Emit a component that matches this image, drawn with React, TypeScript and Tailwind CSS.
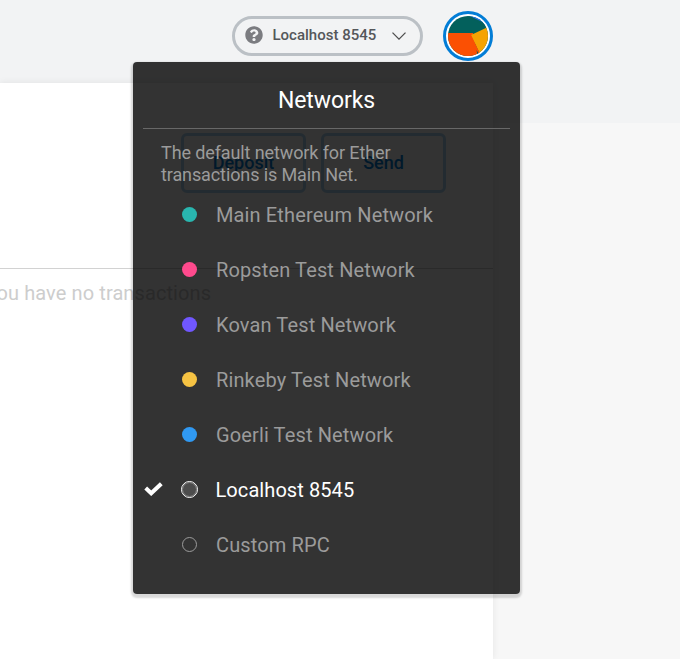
import React from 'react';

const networks = [
  { name: 'Main Ethereum Network', dot: 'bg-[#29b6af]' },
  { name: 'Ropsten Test Network', dot: 'bg-[#ff4a8d]' },
  { name: 'Kovan Test Network', dot: 'bg-[#7057ff]' },
  { name: 'Rinkeby Test Network', dot: 'bg-[#f6c343]' },
  { name: 'Goerli Test Network', dot: 'bg-[#3099f2]' },
];

function NetworkPicker() {
  return (
    <button className="flex h-10 w-[191px] items-center rounded-full border-3 border-[#bbc0c5] pl-[10px] pr-[14px]">
      <svg width="18" height="18" viewBox="0 0 512 512" className="mb-[2px] shrink-0" fill="#7b7c80">
        <path d="M504 256c0 136.997-111.043 248-248 248S8 392.997 8 256C8 119.083 119.043 8 256 8s248 111.083 248 248zM262.655 90c-54.497 0-89.255 22.957-116.549 63.758-3.536 5.286-2.353 12.415 2.715 16.258l34.699 26.31c5.205 3.947 12.621 3.008 16.665-2.122 17.864-22.658 30.113-35.797 57.303-35.797 20.429 0 45.698 13.148 45.698 32.958 0 14.976-12.363 22.667-32.534 33.976C247.128 238.528 216 254.941 216 296v4c0 6.627 5.373 12 12 12h56c6.627 0 12-5.373 12-12v-1.333c0-28.462 83.186-29.647 83.186-106.667 0-58.002-60.165-102-116.531-102zM256 338c-25.365 0-46 20.635-46 46 0 25.364 20.635 46 46 46s46-20.636 46-46c0-25.365-20.635-46-46-46z" />
      </svg>
      <span className="mb-[2px] ml-[9.5px] whitespace-nowrap text-[15px] font-medium leading-5 text-[#55575a]">Localhost 8545</span>
      <svg width="14" height="8" viewBox="0 0 14 8" className="ml-auto shrink-0" fill="none" stroke="#4d4d4d" strokeWidth="1.3">
        <path d="M.5.6 7 7.1 13.500.6" />
      </svg>
    </button>
  );
}

function Avatar() {
  return (
    <svg width="50" height="50" viewBox="0 0 50 50" className="shrink-0">
      <defs>
        <clipPath id="avatar">
          <circle cx="25" cy="25" r="20" />
        </clipPath>
      </defs>
      <circle cx="25" cy="25" r="23.500" fill="#fff" stroke="#037dd6" strokeWidth="3" />
      <g clipPath="url(#avatar)">
        <path d="M0 0h50v50H0z" fill="#03605c" />
        <path d="M25 4 45 15.500 45 0z" fill="#2370e1" />
        <path d="M22 3 46 14 44 17z" fill="#03605c" />
        <path d="M0 22h30l5 28H0z" fill="#fb5003" />
        <path d="m28 24 22-10.500v34H39z" fill="#f5a303" />
        <path d="m28 24-1 0 7.500 22h1.500l1-3.500z" fill="#fb5003" />
        <path d="m33.500 39 3.500 6-2 2z" fill="#03605c" />
      </g>
    </svg>
  );
}

function NetworkMenu() {
  return (
    <div className="absolute left-[133px] top-[62px] h-[532px] w-[387px] rounded bg-black/80 px-[10px] text-[#9b9b9b] shadow-[0_2px_2px_2px_rgba(0,0,0,0.15)]">
      <h2 className="h-[67px] border-b border-[#686868] pt-[25px] text-center text-[23px] leading-[27px] tracking-[-0.1px] text-white">Networks</h2>
      <p className="h-[58px] pl-[18px] pt-[13px] text-[18px] leading-[22px] tracking-[-0.11px]">
        The default network for Ether
        <br />
        transactions is Main Net.
      </p>
      <ul className="text-[20px] leading-6">
        {networks.map(({ name, dot }) => (
          <li key={name} className="flex h-[55px] items-center pl-[39px]">
            <span className={`mr-[19px] size-[15px] rounded-full ${dot}`} />
            <span className="tracking-[0.13px]">{name}</span>
          </li>
        ))}
        <li className="flex h-[55px] items-center pl-[1px] text-white">
          <svg width="19" height="14" viewBox="0 0 19 14" className="mb-[2px]" fill="none" stroke="white" strokeWidth="4">
            <path d="m1.700 6 5.500 5.300L17.300 1.700" />
          </svg>
          <span className="mb-px ml-[17.5px] mr-[18px] flex size-[17px] items-center justify-center rounded-full border border-white">
            <span className="size-[15px] rounded-full border border-[#8d8d8d] bg-[#4c4c4c]" />
          </span>
          <span className="tracking-[0.08px]">Localhost 8545</span>
        </li>
        <li className="flex h-[55px] items-center pl-[39px]">
          <span className="mr-[19px] size-[15px] rounded-full border border-[#9b9b9b]" />
          <span className="tracking-[0.13px]">Custom RPC</span>
        </li>
      </ul>
    </div>
  );
}

export default function App() {
  return (
    <div className="relative flex h-[659px] w-[680px] flex-col overflow-hidden bg-[linear-gradient(#f2f3f4_123px,#f7f7f7_123px)] font-['Roboto',sans-serif]">
      <header className="flex h-[83px] shrink-0 items-start pl-[232px]">
        <div className="mt-4">
          <NetworkPicker />
        </div>
        <div className="ml-5 mt-[11px]">
          <Avatar />
        </div>
      </header>
      <main className="w-[493px] grow bg-white shadow-[0_0_7px_rgba(0,0,0,0.08)]">
        <div className="flex h-[186px] gap-[15px] border-b border-[#d2d2d2] pl-[181px] pt-[50px] text-[18px] font-medium text-[#037dd6]">
          <button className="h-[60px] w-[125px] rounded-md border-3 border-[#b0d7f2] pb-[2px]">Deposit</button>
          <button className="h-[60px] w-[125px] rounded-md border-3 border-[#b0d7f2] pb-[2px]">Send</button>
        </div>
        <p className="-ml-[15px] whitespace-nowrap pt-3 text-[20px] leading-6 tracking-[0.1px] text-[#cdcdcd]">You have no transactions</p>
      </main>
      <NetworkMenu />
    </div>
  );
}
